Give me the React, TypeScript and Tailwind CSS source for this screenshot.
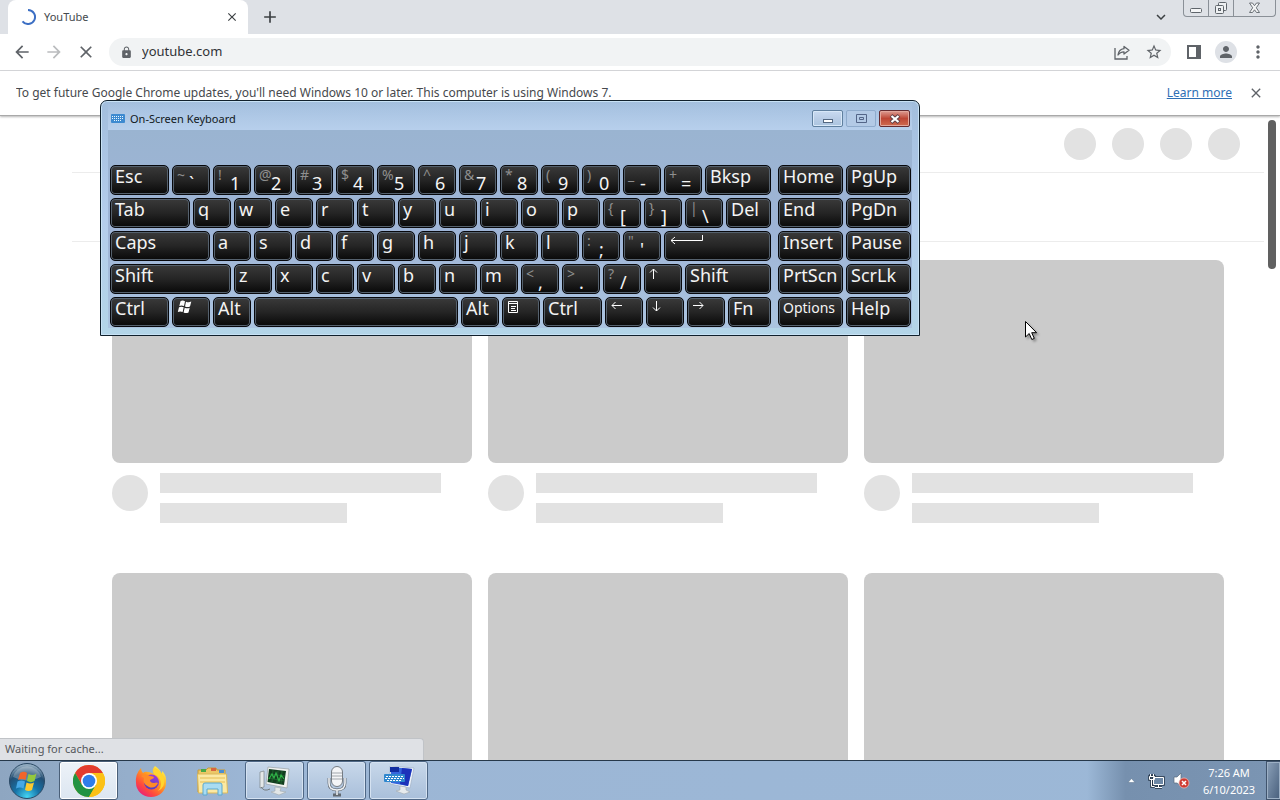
import clsx from 'clsx';
import type { ReactNode } from 'react';
import { MdAdd, MdArrowBack, MdArrowForward, MdClose, MdExpandMore, MdLock, MdMoreVert, MdPerson, MdStarBorder } from 'react-icons/md';

type KeyDef = {
    label?: string;
    upper?: string;
    icon?: ReactNode;
    name?: string;
    width?: string;
    small?: boolean;
};

function Glyph({ d, width = 14 }: { d: string; width?: number }) {
    return (
        <svg width={width} height="14" viewBox={`0 0 ${width} 14`} fill="none" stroke="white" aria-hidden="true">
            <path d={d} />
        </svg>
    );
}

const WindowsGlyph = (
    <svg width="16" height="14" viewBox="0 0 16 14" fill="white" aria-hidden="true">
        <path d="M3.5 1.2Q5.5 0 8 1.2L7 6Q4.500 5 2.300 6Z" />
        <path d="M9 1.700Q11.500 2.800 14.300 1.600L13 6.500Q10.500 7.500 8 6.500Z" />
        <path d="M2 7.200Q4.300 6.100 6.700 7.200L5.600 12Q3.200 10.900 .8 12Z" />
        <path d="M7.700 7.700Q10.200 8.700 12.700 7.700L11.500 12.500Q9 13.600 6.600 12.500Z" />
    </svg>
);

const MenuGlyph = (
    <svg width="12" height="14" viewBox="0 0 12 14" fill="none" stroke="white" aria-hidden="true">
        <path d="M1.500 1.500h9v11h-9zM1 3.500h10M4 6.500h5M4 8.500h4M4 10.500h5" />
    </svg>
);

const letters = (text: string): KeyDef[] => text.split('').map((label) => ({ label }));

const pairs = (text: string): KeyDef[] => text.split(' ').map((pair) => ({ upper: pair[0], label: pair[1] }));

const mainRows: KeyDef[][] = [
    [{ label: 'Esc', width: 'w-[59px]' }, ...pairs('~` !1 @2 #3 $4 %5 ^6 &7 *8 (9 )0 _- +='), { label: 'Bksp', width: 'flex-1' }],
    [{ label: 'Tab', width: 'w-[80px]' }, ...letters('qwertyuiop'), ...pairs('{[ }] |\\'), { label: 'Del', width: 'flex-1' }],
    [
        { label: 'Caps', width: 'w-[100px]' },
        ...letters('asdfghjkl'),
        ...pairs(':; "\''),
        { name: 'Enter', icon: <Glyph width={36} d="M2 6.500h31.500V1M6 3 2 6.500 6 10" />, width: 'flex-1' },
    ],
    [
        { label: 'Shift', width: 'w-[121px]' },
        ...letters('zxcvbnm'),
        ...pairs('<, >. ?/'),
        { name: 'Up', icon: <Glyph d="M4.500 12V2M1 5.500 4.500 2 8 5.500" /> },
        { label: 'Shift', width: 'flex-1' },
    ],
    [
        { label: 'Ctrl', width: 'w-[59px]' },
        { name: 'Windows', icon: WindowsGlyph },
        { label: 'Alt' },
        { name: 'Space', width: 'flex-1' },
        { label: 'Alt' },
        { name: 'Menu', icon: MenuGlyph },
        { label: 'Ctrl', width: 'w-[59px]' },
        { name: 'Left', icon: <Glyph d="M12 5.500H2M5.500 2 2 5.500 5.500 9" /> },
        { name: 'Down', icon: <Glyph d="M5.500 1v10M2 7.500 5.500 11 9 7.500" /> },
        { name: 'Right', icon: <Glyph d="M1 5.500h10M7.500 2 11 5.500 7.500 9" /> },
        { label: 'Fn', width: 'w-[43px]' },
    ],
];

const sideKeys: KeyDef[] = [
    { label: 'Home' },
    { label: 'PgUp' },
    { label: 'End' },
    { label: 'PgDn' },
    { label: 'Insert' },
    { label: 'Pause' },
    { label: 'PrtScn' },
    { label: 'ScrLk' },
    { label: 'Options', small: true },
    { label: 'Help' },
];

function Key({ label, upper, icon, name, width = 'w-[38px]', small }: KeyDef) {
    return (
        <button
            type="button"
            aria-label={name}
            className={clsx(
                'flex h-[30px] items-start overflow-hidden rounded-[5px] border border-[#07080c] bg-linear-to-b from-[#3a3a3a] via-[#252525] to-[#090909] pl-1 text-left text-[#f4f4f4] shadow-[inset_0_0_0_1px_#55616d]',
                width
            )}
        >
            {upper && <span className="w-3 shrink-0 pt-[2px] text-[14px] leading-[14px] text-[#8f8f8f]">{upper}</span>}
            {icon && <span className="pt-[2px]">{icon}</span>}
            {label && (
                <span className={clsx('leading-5', small ? 'text-[14px]' : 'text-[18px]', upper && 'pt-[7px]')}>{label}</span>
            )}
        </button>
    );
}

function OnScreenKeyboard() {
    return (
        <section
            aria-label="On-Screen Keyboard"
            className="absolute top-[100px] left-[100px] w-[820px] rounded-t-[7px] border border-[#10202c] bg-linear-to-b from-[#a2bedd] via-[#b4cdec] to-[#b3d5e8] px-[7px] pb-[7px] shadow-[inset_0_0_0_1px_#c8e2f5]"
        >
            <header className="flex h-[29px] items-center bg-linear-to-b from-transparent to-[#b7cfec] pt-[6px] pl-[3px]">
                <svg width="14" height="9" viewBox="0 0 14 9" aria-hidden="true">
                    <rect width="14" height="9" rx="1" fill="#3d8ad0" />
                    <path d="M1 2.500h12M1 4.500h12M3 6.500h8" stroke="#e8f6ff" strokeDasharray="1 1" />
                </svg>
                <h2 className="ml-[5px] flex-1 text-[11px] leading-4 text-[#101820]">On-Screen Keyboard</h2>
                <div className="flex gap-[3px] pr-[2px]">
                    <button type="button" aria-label="Minimize" className="flex h-[17px] w-[31px] items-center justify-center rounded-[2px] border border-[#60809f] bg-linear-to-b from-[#c9dbf1] via-[#b9cde6] via-50% to-[#abc4df] shadow-[inset_0_0_0_1px_#d8e8f8]">
                        <svg width="12" height="11" viewBox="0 0 12 11" aria-hidden="true">
                            <rect x="1.500" y="6.500" width="9" height="3" fill="white" stroke="#536780" />
                        </svg>
                    </button>
                    <button type="button" aria-label="Maximize" className="flex h-[17px] w-[30px] items-center justify-center rounded-[2px] border border-[#8fabcc] bg-[#b3cae6]">
                        <svg width="11" height="9" viewBox="0 0 11 9" fill="none" stroke="#536588" aria-hidden="true">
                            <path d="M.5.5h10v8H.5zM3.500 3.500h4v2h-4z" />
                        </svg>
                    </button>
                    <button type="button" aria-label="Close" className="flex h-[17px] w-[31px] items-center justify-center rounded-[2px] border border-[#642b30] bg-linear-to-b from-[#dc9c93] from-0% via-[#bd4635] via-50% to-[#cf6b50] shadow-[inset_0_0_0_1px_#e2a79c]">
                        <svg width="12" height="10" viewBox="0 0 12 10" aria-hidden="true">
                            <path d="M2 1.500 10 8.500M10 1.500 2 8.500" stroke="#604048" strokeWidth="4" />
                            <path d="M2.500 2 9.500 8M9.500 2 2.500 8" stroke="white" strokeWidth="2.200" />
                        </svg>
                    </button>
                </div>
            </header>
            <div className="flex gap-[7px] bg-linear-to-b from-[#9ab4d1] via-[#9eb4d6] to-[#abc4e0] pt-[35px] pr-[1px] pb-[1px] pl-[2px]">
                <div className="flex min-w-0 flex-1 flex-col gap-[3px]">
                    {mainRows.map((row, i) => (
                        <div key={i} className="flex gap-[3px]">
                            {row.map((key, j) => (
                                <Key key={j} {...key} />
                            ))}
                        </div>
                    ))}
                </div>
                <div className="grid grid-cols-2 content-start gap-[3px]">
                    {sideKeys.map((key) => (
                        <Key key={key.label} {...key} width="w-[65px]" />
                    ))}
                </div>
            </div>
        </section>
    );
}

function TabStrip() {
    return (
        <div className="flex h-[34px] shrink-0 bg-[#dee1e6] pl-2">
            <div className="flex w-60 items-center rounded-t-lg bg-white px-3">
                <svg width="16" height="16" viewBox="0 0 16 16" fill="none" aria-hidden="true">
                    <path d="M8 1a7 7 0 1 1-5.500 11.300" stroke="#3c6fc4" strokeWidth="2" />
                </svg>
                <span className="ml-2 flex-1 text-[11px] text-[#45494d]">YouTube</span>
                <button type="button" aria-label="Close tab" className="text-[#3c4043]">
                    <MdClose size={14} className="-mr-[3px]" />
                </button>
            </div>
            <button type="button" aria-label="New tab" className="ml-3 text-[#3c4043]">
                <MdAdd size={20} />
            </button>
            <button type="button" aria-label="Search tabs" className="ml-auto text-[#3c4043]">
                <MdExpandMore size={18} />
            </button>
            <div className="mr-1 ml-[13px] flex h-[17px] rounded-b-[4px] border border-t-0 border-[#8a9097] text-[#5f656b]">
                <button type="button" aria-label="Minimize window" className="flex w-[25px] justify-center border-r border-[#8a9097]">
                    <svg width="14" height="16" viewBox="0 0 14 16" fill="#f4f5f6" stroke="currentColor" aria-hidden="true">
                        <rect x="1.500" y="8.500" width="11" height="4" rx="1" />
                    </svg>
                </button>
                <button type="button" aria-label="Restore window" className="flex w-[25px] justify-center border-r border-[#8a9097]">
                    <svg width="14" height="16" viewBox="0 0 14 16" fill="#eef0f2" stroke="currentColor" aria-hidden="true">
                        <rect x="4.500" y="2.500" width="8" height="8" rx="1" />
                        <rect x="1.500" y="5.500" width="8" height="8" rx="1" />
                        <rect x="4.500" y="8.500" width="2" height="2" />
                    </svg>
                </button>
                <button type="button" aria-label="Close window" className="flex w-[41px] justify-center">
                    <svg width="13" height="16" viewBox="0 0 13 16" fill="#f4f5f6" stroke="currentColor" strokeWidth=".9" aria-hidden="true">
                        <path d="M1.500 3h3l2 2.700L8.500 3h3L8.300 7.800l3.200 4.700h-3l-2-2.700-2 2.700h-3l3.200-4.700z" />
                    </svg>
                </button>
            </div>
        </div>
    );
}

function Toolbar() {
    return (
        <div className="flex h-[37px] shrink-0 items-center border-b border-[#d5d7da] bg-white pr-3 pl-3 text-[#5f6368]">
            <div className="flex gap-3">
                <button type="button" aria-label="Back">
                    <MdArrowBack size={20} />
                </button>
                <button type="button" aria-label="Forward" className="text-[#babcbe]">
                    <MdArrowForward size={20} />
                </button>
                <button type="button" aria-label="Stop">
                    <MdClose size={20} />
                </button>
            </div>
            <div className="ml-[13px] flex h-7 flex-1 items-center rounded-full bg-[#f1f3f4] pr-2 pl-[11px]">
                <MdLock size={13} />
                <input aria-label="Address" readOnly value="youtube.com" className="ml-[9px] min-w-0 flex-1 bg-transparent text-[13px] text-[#303236] outline-none" />
                <button type="button" aria-label="Share">
                    <svg width="18" height="18" viewBox="0 0 18 18" fill="none" stroke="currentColor" strokeWidth="1.300" aria-hidden="true">
                        <path d="M2 5v11h12v-3" />
                        <path d="M11 3.500 16 7.300 11 11V8.800Q7 8.800 5 12 5.800 6.400 11 5.700Z" strokeLinejoin="round" />
                    </svg>
                </button>
                <button type="button" aria-label="Bookmark" className="ml-[14px]">
                    <MdStarBorder size={18} />
                </button>
            </div>
            <button type="button" aria-label="Side panel" className="ml-4">
                <svg width="14" height="14" viewBox="0 0 14 14" aria-hidden="true">
                    <path d="M1 1h12v12H1z" fill="none" stroke="currentColor" strokeWidth="2" />
                    <path d="M9 0h5v14H9z" fill="currentColor" />
                </svg>
            </button>
            <button type="button" aria-label="Profile" className="ml-[14px] flex h-[22px] w-[22px] items-center justify-center rounded-full bg-[#dee1e6]">
                <MdPerson size={18} />
            </button>
            <button type="button" aria-label="More" className="ml-[11px]">
                <MdMoreVert size={20} />
            </button>
        </div>
    );
}

function SkeletonCard() {
    return (
        <div>
            <div className="aspect-video rounded-lg bg-[#cbcbcb]" />
            <div className="mt-[10px] flex gap-3">
                <div className="mt-[2px] h-9 w-9 rounded-full bg-[#e2e2e2]" />
                <div className="flex-1">
                    <div className="h-5 w-[90%] bg-[#e2e2e2]" />
                    <div className="mt-[10px] h-5 w-[60%] bg-[#e2e2e2]" />
                </div>
            </div>
        </div>
    );
}

function SkeletonPage() {
    return (
        <main className="flex min-h-0 flex-1 overflow-hidden bg-white">
            <div className="flex-1 pl-[72px]">
                <div className="flex h-[57px] items-center justify-end gap-4 border-b border-[#ececec] pr-6">
                    {[0, 1, 2, 3].map((i) => (
                        <div key={i} className="h-8 w-8 rounded-full bg-[#e2e2e2]" />
                    ))}
                </div>
                <div className="h-[69px] border-b border-[#ececec]" />
                <div className="grid grid-cols-3 gap-x-4 gap-y-[50px] px-10 pt-[18px]">
                    {[0, 1, 2, 3, 4, 5].map((i) => (
                        <SkeletonCard key={i} />
                    ))}
                </div>
            </div>
            <div className="w-4 pt-1 pl-1">
                <div className="h-[149px] w-2 rounded-full bg-[#606060]" />
            </div>
        </main>
    );
}

const OrbIcon = (
    <svg width="38" height="38" viewBox="0 0 38 38" aria-hidden="true">
        <defs>
            <radialGradient id="orb" cx=".5" cy=".95" r=".9">
                <stop offset="0" stopColor="#45d5f3" />
                <stop offset=".4" stopColor="#1673a8" />
                <stop offset=".75" stopColor="#234e73" />
                <stop offset="1" stopColor="#91abc0" />
            </radialGradient>
        </defs>
        <circle cx="19" cy="19" r="17.500" fill="url(#orb)" stroke="#2b4a66" />
        <path d="M5 15a14.500 14.500 0 0 1 28 0q-14 7-28 0z" fill="white" opacity=".25" />
        <path d="M12 11q4-2.500 7 0l-1.500 7q-3.500-2-7.500 0z" fill="#f0652b" />
        <path d="M20.500 12q4 2.300 8-.5l-2 7.500q-3.500 2.300-7.500 0z" fill="#94c83d" />
        <path d="M9.500 19.500q4-2 7.500 0l-1.500 7q-3.500-2-7.500 0z" fill="#46a8e6" />
        <path d="M18.500 20.500q4 2.200 7.500 0l-2 7.500q-3.500 2-7 0z" fill="#fdc92f" />
    </svg>
);

const ChromeIcon = (
    <svg width="32" height="32" viewBox="0 0 32 32" aria-hidden="true">
        <circle cx="16" cy="16" r="16" fill="#fbc116" />
        <path d="M2.140 8A16 16 0 0 1 29.860 8L16 8 9.070 20Z" fill="#e33b2e" />
        <path d="M2.140 8A16 16 0 0 0 16 32L22.930 20 9.070 20Z" fill="#229342" />
        <path d="M29.860 8H16L22.930 20 16 32A16 16 0 0 0 29.860 8Z" fill="#fbc116" />
        <circle cx="16" cy="16" r="8" fill="white" />
        <circle cx="16" cy="16" r="6.300" fill="#2f7de9" />
    </svg>
);

const FirefoxIcon = (
    <svg width="32" height="32" viewBox="0 0 32 32" aria-hidden="true">
        <defs>
            <linearGradient id="fox" x1=".85" y1=".1" x2=".2" y2=".95">
                <stop offset="0" stopColor="#fff04a" />
                <stop offset=".4" stopColor="#ff9a20" />
                <stop offset=".75" stopColor="#ff4a3d" />
                <stop offset="1" stopColor="#e8207a" />
            </linearGradient>
            <linearGradient id="globe" x1=".7" y1="0" x2=".3" y2="1">
                <stop offset="0" stopColor="#a03ad8" />
                <stop offset="1" stopColor="#4c3fc0" />
            </linearGradient>
        </defs>
        <path d="M20 1q-4 4-1 8Q11 5 8 8 6 6 6 3 0 9 1 18A15 14 0 0 0 31 18Q32 10 27 6L27 10Q25 4 20 1Z" fill="url(#fox)" />
        <circle cx="16.500" cy="17" r="7.500" fill="url(#globe)" />
        <path d="M6 11q5-3 9 0 4 0 4 2l-4 2q0 3 4 3 3-1 4 0-3 6-9 4-7-3-5-9z" fill="#ff8a28" />
        <path d="M19 9q7 3 7 10 0 4-3 7 8-4 6-13-2-7-9-10-3 3-1 6z" fill="#ffd52e" />
    </svg>
);

const ExplorerIcon = (
    <svg width="34" height="30" viewBox="0 0 34 30" aria-hidden="true">
        <path d="M2 4h8l2-2h8l1 2h8v22H2z" fill="#ecc867" stroke="#c79b36" />
        <path d="M5 3h5v3H5z" fill="#49a946" />
        <path d="M15 2h5v3h-5z" fill="#d86540" />
        <path d="M23 4h5v3h-5z" fill="#4b8ed0" />
        <path d="M1.500 8h29l1 19h-29z" fill="#fbe9a4" stroke="#dbb95b" />
        <path d="M4 12h25M4 16h25" stroke="#f0d37b" strokeWidth="2" />
        <path d="M7 29V19q0-2 2-2h15q2 0 2 2v10h-4v-6H11v6z" fill="#a9dcf2" stroke="#5aa9d0" />
    </svg>
);

const MonitorIcon = (
    <svg width="34" height="30" viewBox="0 0 34 30" aria-hidden="true">
        <path d="M2 6l4-1v16l-4 1z" fill="#e4e8e8" stroke="#7b8588" strokeWidth=".7" />
        <path d="M3 21q3 5 9 2" fill="none" stroke="#737b7d" />
        <path d="M10 1 31 3 29 22 8 18z" fill="#f1f2f0" stroke="#98a1a5" strokeWidth=".7" />
        <path d="M11 3 28 5 26 19 9.500 16z" fill="#123d1f" />
        <path d="M10.500 8l16.500 2M10 12l16.500 3M15 4l-1 12M20 4.500l-1 13M24 5l-1 13" stroke="#277b39" strokeWidth=".6" />
        <path d="m11 13 3-5 2 4 2-5 3 8 2-6 3 4" fill="none" stroke="#2fb347" strokeWidth="1.200" />
        <path d="m17 21 6 1-1 3 6 1-7 3-8-3 4-1z" fill="#e2e6e7" stroke="#a1aaad" strokeWidth=".6" />
    </svg>
);

const MicIcon = (
    <svg width="22" height="32" viewBox="0 0 22 32" aria-hidden="true">
        <path d="M3 13v5q0 7 8 7t8-7v-5M11 25v5M7 30h8" fill="none" stroke="#626970" strokeWidth="2.800" />
        <path d="M3 13v5q0 7 8 7t8-7v-5M11 25v5" fill="none" stroke="#eef1f4" strokeWidth="1.600" />
        <rect x="5.500" y="1.500" width="11" height="20" rx="5.500" fill="#f4f5f7" stroke="#757c83" />
        <path d="M6 8h10M6 11h10M6 14h10" stroke="#a0a6ac" />
    </svg>
);

const OskIcon = (
    <svg width="32" height="30" viewBox="0 0 32 30" aria-hidden="true">
        <path d="M7 0 31 2 27 22 7 18z" fill="#eef3fa" stroke="#a2b2c6" strokeWidth=".7" />
        <path d="M8 1 29 3 25 20 8 17z" fill="#3465dc" />
        <path d="M19 2 29 3 25 20 17 18z" fill="#1c32ba" />
        <path d="M7 1h9v5H7z" fill="#112da0" />
        <rect x="1" y="8" width="21" height="8" rx="1" fill="#2f87ce" />
        <path d="M3 10.500h18M2 12.500h19M4 14.500h15" stroke="white" strokeDasharray="2 1" />
        <path d="m17 20 6 1v3l4 2-6 2-8-3 4-1z" fill="#e7ebed" stroke="#a2abb0" strokeWidth=".6" />
    </svg>
);

const runningStyle = 'border border-[#4f6886] bg-linear-to-b from-[#c8d8ea] to-[#a9bfda] shadow-[inset_0_0_0_1px_#d5e2f1]';

const taskButtons = [
    { name: 'Google Chrome', icon: ChromeIcon, style: 'border border-[#4a5f78] bg-linear-to-b from-[#edf2f8] to-[#dce6f1] shadow-[inset_0_0_0_1px_#ffffff]' },
    { name: 'Firefox', icon: FirefoxIcon, style: '' },
    { name: 'Windows Explorer', icon: ExplorerIcon, style: '' },
    { name: 'System Monitor', icon: MonitorIcon, style: runningStyle },
    { name: 'Microphone', icon: MicIcon, style: runningStyle },
    { name: 'On-Screen Keyboard', icon: OskIcon, style: runningStyle },
];

function Taskbar() {
    return (
        <footer className="flex h-10 shrink-0 border-t border-[#26384a] bg-linear-to-r from-[#8ea6c1] via-[#9cb6d5] via-20% to-[#9cb8d7]">
            <button type="button" aria-label="Start" className="flex w-[59px] items-center pl-2">
                {OrbIcon}
            </button>
            <nav className="flex gap-[3px]" aria-label="Taskbar">
                {taskButtons.map(({ name, icon, style }) => (
                    <button key={name} type="button" aria-label={name} className={clsx('flex w-[59px] items-center justify-center rounded-[3px]', style)}>
                        {icon}
                    </button>
                ))}
            </nav>
            <div className="ml-auto flex items-center bg-linear-to-r from-[#9cb8d7] via-[#7690ae] via-20% to-[#7b95b3] pl-10">
                <button type="button" aria-label="Show hidden icons">
                    <svg width="9" height="6" viewBox="0 0 9 6" aria-hidden="true">
                        <path d="M4.500.5 8 4.500H1z" fill="white" stroke="#56708c" strokeWidth=".5" />
                    </svg>
                </button>
                <svg className="ml-3" width="17" height="16" viewBox="0 0 17 16" fill="none" aria-hidden="true">
                    <path d="M5.500 4.500h10v7h-10zM7 14.500h7M10.500 12v2M2.500 1v3M5.500 1v3M1.500 3.500h5v3h-5zM3.500 7v6.500h3" stroke="#243447" strokeWidth="2.500" />
                    <path d="M5.500 4.500h10v7h-10z" fill="#6d88a6" />
                    <path d="M5.500 4.500h10v7h-10zM7 14.500h7M10.500 12v2M2.500 1v3M5.500 1v3M1.500 3.500h5v3h-5zM3.500 7v6.500h3" stroke="white" />
                </svg>
                <svg className="ml-2" width="17" height="17" viewBox="0 0 17 17" aria-hidden="true">
                    <path d="M1 5h3l4-4v13l-4-3H1z" fill="white" stroke="#596c80" strokeWidth=".7" />
                    <circle cx="11" cy="11" r="5" fill="#cf3b32" stroke="#f3bbb6" strokeWidth=".7" />
                    <path d="m9 9 4 4M13 9l-4 4" stroke="white" strokeWidth="1.500" />
                </svg>
                <div className="w-[76px] pl-[2px] text-center text-[11px] leading-[17px] text-white">
                    <div>7:26 AM</div>
                    <div>6/10/2023</div>
                </div>
                <button type="button" aria-label="Show desktop" className="h-full w-[14px] border border-r-0 border-[#40546d] bg-linear-to-br from-[#8ca1b9] to-[#485f7c] shadow-[inset_0_0_0_1px_#9db0c5]" />
            </div>
        </footer>
    );
}

export default function App() {
    return (
        <div className="relative flex h-screen flex-col overflow-hidden bg-white font-['Noto_Sans',sans-serif]">
            <TabStrip />
            <Toolbar />
            <div className="relative flex h-[45px] shrink-0 items-center border-b border-[#a9a9a9] bg-white px-4 text-[12px] text-[#46494d] shadow-[0_1px_2px_#b8b8b8]">
                <p className="flex-1 truncate">To get future Google Chrome updates, you'll need Windows 10 or later. This computer is using Windows 7.</p>
                <a href="#learn" className="text-[#2f6fb5] underline">
                    Learn more
                </a>
                <button type="button" aria-label="Dismiss" className="ml-4 text-[#5f6368]">
                    <MdClose size={16} />
                </button>
            </div>
            <SkeletonPage />
            <div className="absolute bottom-10 left-0 flex h-[22px] w-[424px] items-center rounded-tr-[4px] border-t border-r border-[#c0c3c7] bg-[#dfe1e5] pl-[5px] text-[11px] text-[#54575b]">
                Waiting for cache...
            </div>
            <Taskbar />
            <OnScreenKeyboard />
            <svg className="pointer-events-none absolute top-[320px] left-[1024px] drop-shadow-[2px_2px_1px_rgba(0,0,0,0.3)]" width="14" height="22" viewBox="0 0 14 22" aria-hidden="true">
                <path d="M1.500 1.500v15.500l3.700-3.500 2.600 6 2.500-1.100-2.600-5.700h4.900z" fill="white" stroke="black" />
            </svg>
        </div>
    );
}
